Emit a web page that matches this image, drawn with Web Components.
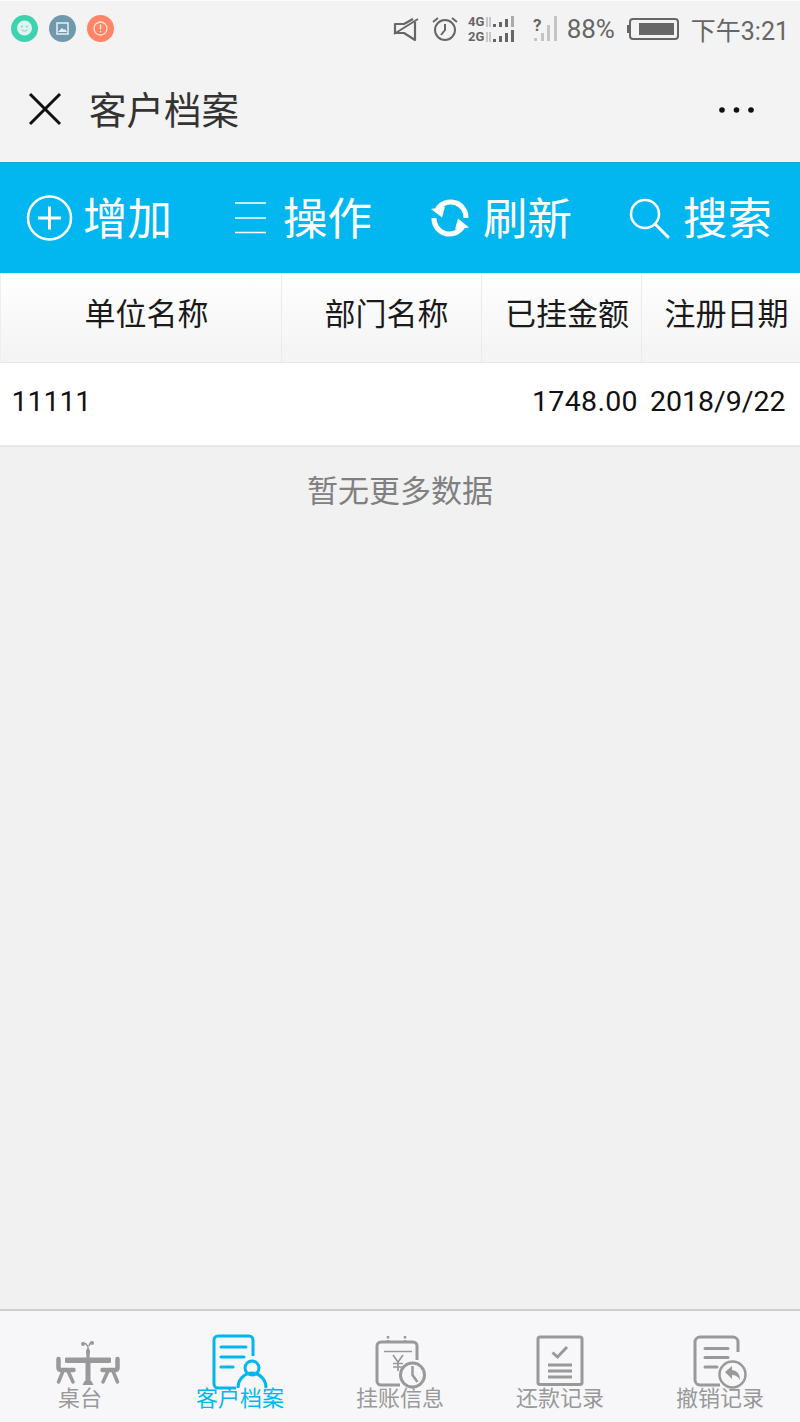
<!DOCTYPE html>
<html lang="zh-CN">
<head>
<meta charset="utf-8">
<title>客户档案</title>
<style>
html,body{margin:0;padding:0;height:100%}
body{font-family:"Noto Sans CJK SC",Roboto,sans-serif;background:#f1f1f2}
</style>
</head>
<body>
<app-shell>
  <status-bar></status-bar>
  <nav-bar title="客户档案"></nav-bar>
  <tool-bar>
    <tool-btn icon="plus" label="增加"></tool-btn>
    <tool-btn icon="menu" label="操作"></tool-btn>
    <tool-btn icon="refresh" label="刷新"></tool-btn>
    <tool-btn icon="search" label="搜索"></tool-btn>
  </tool-bar>
  <data-table></data-table>
  <tab-bar>
    <tab-item icon="table" label="桌台"></tab-item>
    <tab-item icon="customer" label="客户档案" active></tab-item>
    <tab-item icon="credit" label="挂账信息"></tab-item>
    <tab-item icon="repay" label="还款记录"></tab-item>
    <tab-item icon="undo" label="撤销记录"></tab-item>
  </tab-bar>
</app-shell>
<script>
const def=(name,html)=>{customElements.define(name,class extends HTMLElement{
  connectedCallback(){if(this.shadowRoot)return;this.attachShadow({mode:'open'}).innerHTML=typeof html==='function'?html(this):html;}
});};

def('app-shell',`<style>:host{display:flex;flex-direction:column;width:800px;height:1422px;overflow:hidden;background:#f1f1f2}
::slotted(data-table){flex:1}</style><slot></slot>`);

def('status-bar',`<style>
:host{display:flex;align-items:center;height:55px;background:#f3f3f3;border-top:1px solid #fbfbfb;color:#666;font:26px Roboto,"Noto Sans CJK SC",sans-serif}
.l{display:flex;gap:11px;margin-left:10.500px}
.r{display:flex;align-items:center;margin-left:auto;margin-right:11px}
svg{display:block}
.pct{margin-left:8px;width:50px;letter-spacing:-.1px}
.time{margin-left:12px;white-space:nowrap;font-size:25px}
.bt{margin-left:10px}
text{font:700 13px Roboto,sans-serif;fill:#666}
</style>
<div class="l">
<svg width="27" height="27" viewBox="0 0 27 27"><circle cx="13.500" cy="13.500" r="13.500" fill="#3ed2ae"/><circle cx="13.500" cy="13" r="7.500" fill="#def5ef"/><circle cx="11" cy="11.500" r=".9" fill="#6fd9bd"/><circle cx="16" cy="11.500" r=".9" fill="#6fd9bd"/><path d="M10.500 15q3 2.500 6 0" stroke="#6fd9bd" fill="none"/></svg>
<svg width="27" height="27" viewBox="0 0 27 27"><circle cx="13.500" cy="13.500" r="13.500" fill="#7099ad"/><path d="M8 8h11v11H8z" fill="none" stroke="#e8f0f4" stroke-width="1.500"/><path d="M9 17l4-4 2 2 1-1 2 3z" fill="#e8f0f4"/></svg>
<svg width="27" height="27" viewBox="0 0 27 27"><circle cx="13.500" cy="13.500" r="13.500" fill="#ff8566"/><circle cx="13.500" cy="13.500" r="6.500" fill="none" stroke="#ffe9e3" stroke-width="1.300"/><path d="M13.500 9.500v5M13.500 16v1.300" stroke="#ffe9e3" stroke-width="1.400"/></svg>
</div>
<div class="r">
<svg width="26" height="26" viewBox="0 0 26 26"><g fill="none" stroke="#666" stroke-width="2.200" stroke-linejoin="round"><path d="M22 6v18L11 17H2V8h9l9-5"/><path d="M1 18L25 3" stroke-width="2"/></g></svg>
<svg style="margin-left:12px" width="28" height="28" viewBox="0 0 28 28"><g fill="none" stroke="#666" stroke-width="2"><circle cx="14" cy="15" r="10"/><path d="M14 9v6l-4 5"/><path d="M2 7l5-4M26 7l-5-4"/></g></svg>
<svg style="margin-left:9px" width="50" height="30" viewBox="0 0 50 30"><text x="0" y="12">4G</text><text x="0" y="27">2G</text><path d="M19 3v10M22 3v10" stroke="#bbb" stroke-width="1.500"/><path d="M19 18v10M22 18v10" stroke="#bbb" stroke-width="1.500"/><g fill="#666"><rect x="25" y="10" width="3" height="3"/><rect x="31" y="8" width="3" height="5"/><rect x="37" y="5" width="3" height="8"/><rect x="43" y="2" width="3" height="11" fill="#aaa"/><rect x="25" y="25" width="3" height="3"/><rect x="31" y="22" width="3" height="6"/><rect x="37" y="19" width="3" height="9"/><rect x="43" y="16" width="3" height="12"/></g></svg>
<svg style="margin-left:15px" width="26" height="36" viewBox="0 0 26 36"><text x="0" y="20" style="font-size:17px">?</text><g fill="#c4c4c4"><rect x="1" y="27" width="3" height="3"/><rect x="8" y="22" width="3" height="8"/><rect x="14" y="14" width="3" height="16"/><rect x="21" y="5" width="3" height="25"/></g></svg>
<span class="pct">88%</span>
<svg class="bt" width="52" height="24" viewBox="0 0 52 24"><rect x="3" y="2" width="48" height="20" rx="3" fill="none" stroke="#666" stroke-width="2"/><rect x="0" y="8" width="3" height="8" fill="#666"/><rect x="12" y="6" width="35" height="12" fill="#666"/></svg>
<span class="time">下午3:21</span>
</div>`);

def('nav-bar',h=>`<style>
:host{display:flex;align-items:center;height:106px;background:#f3f3f3;color:#333}
svg{display:block}
.x{margin-left:28px}
h1{margin:0 0 0 27px;padding-bottom:2px;font:400 37.500px/1 "Noto Sans CJK SC",sans-serif}
.m{margin-left:auto;margin-right:42px;margin-top:2px}
</style>
<svg class="x" width="34" height="34" viewBox="0 0 34 34"><path d="M2 2l30 30M32 2L2 32" stroke="#111" stroke-width="3" fill="none"/></svg>
<h1>${h.getAttribute('title')}</h1>
<svg class="m" width="40" height="8" viewBox="0 0 40 8"><circle cx="4" cy="4" r="2.800" fill="#111"/><circle cx="18.500" cy="4" r="2.800" fill="#111"/><circle cx="33" cy="4" r="2.800" fill="#111"/></svg>`);

def('tool-bar',`<style>:host{display:grid;grid-template-columns:repeat(4,200px);height:111px;background:#02b7f0;box-shadow:inset 0 1px 0 #0dabd9}</style><slot></slot>`);

const toolIcons={
plus:`<circle cx="29.500" cy="30" r="21.500" fill="none" stroke="#fff" stroke-width="2.500"/><path d="M18 30h23M29.500 18.500v23" stroke="#fff" stroke-width="3"/>`,
menu:`<path d="M15 15h31M15 30h31M15 44.500h31" stroke="#fff" stroke-width="1.700"/>`,
refresh:`<g fill="none" stroke="#fff" stroke-width="5"><path d="M17.500 21A15.500 15.500 0 0 1 46 30"/><path d="M14 30A15.500 15.500 0 0 0 42.500 39"/></g><path d="M11 21l14 -2.500l-3 11z" fill="#fff"/><path d="M49 39.500l-14 2l3 -11z" fill="#fff"/>`,
search:`<circle cx="25" cy="26" r="14" fill="none" stroke="#fff" stroke-width="2.500"/><path d="M35 36l13 13" stroke="#fff" stroke-width="3" stroke-linecap="round"/>`
};
def('tool-btn',h=>`<style>
:host{display:flex;align-items:center;padding-left:20px;color:#fff}
svg{display:block;flex:none}
span{margin-left:3px;padding-bottom:2px;font:400 44.500px/1 "Noto Sans CJK SC",sans-serif;white-space:nowrap}
</style><svg width="60" height="60" viewBox="0 0 60 60">${toolIcons[h.getAttribute('icon')]}</svg><span>${h.getAttribute('label')}</span>`);

def('data-table',`<style>
:host{display:block;background:#f1f1f2;color:#111;font-family:Roboto,"Noto Sans CJK SC",sans-serif}
.g{display:grid;grid-template-columns:282px 200px 160px 158px}
.head{height:89px;background:linear-gradient(#fff,#f3f3f3);border-bottom:1px solid #e6e6e6}
.head div{display:flex;align-items:center;justify-content:center;font:400 31px/1 "Noto Sans CJK SC",sans-serif;color:#1a1a1a;border-right:1px solid #ebebeb;padding-bottom:13px;white-space:nowrap}
.head div:first-child{padding-left:11px;border-left:1px solid #eee}
.head div:nth-child(2){padding-left:10px}
.head div:nth-child(3){padding-left:11px}
.head div:last-child{padding-left:11px;border-right:0}
.row{height:82px;background:#fff;border-bottom:2px solid #e8e8e8;font-size:28.500px;line-height:1;align-items:center}
.row div{padding-bottom:3px;white-space:nowrap}
.row div:first-child{padding-left:11.500px;letter-spacing:-.05px}
.row div:nth-child(3){justify-self:end;padding-right:4px;letter-spacing:.35px}
.row div:nth-child(4){padding-left:8px}
.empty{text-align:center;color:#808080;font:400 31px/1 "Noto Sans CJK SC",sans-serif;padding-top:26px}
</style>
<div class="g head"><div>单位名称</div><div>部门名称</div><div>已挂金额</div><div>注册日期</div></div>
<div class="g row"><div>11111</div><div></div><div>1748.00</div><div>2018/9/22</div></div>
<div class="empty">暂无更多数据</div>`);

def('tab-bar',`<style>:host{display:grid;grid-template-columns:repeat(5,160px);height:111px;background:#f7f7fa;border-top:2px solid #cfcfcf}</style><slot></slot>`);

const tabIcons={
table:`<g fill="#999" stroke="#999"><rect x="25" y="27.500" width="46" height="5.500" rx="1" stroke="none"/><rect x="45.500" y="30" width="5" height="22" stroke="none"/><path d="M42.500 55l2-4h7l2 4z" stroke="none"/><path d="M46.500 28l-.5-7 2-5 2 5-.5 7z" stroke="none"/><path d="M48 17q-2-5-6-3.500M49 16q1-4 3-4" fill="none" stroke-width="1.500"/><circle cx="52" cy="13" r="2" stroke="none"/><circle cx="43" cy="14" r="2" stroke="none"/></g>
<g fill="none" stroke="#999" stroke-width="4.500" stroke-linecap="round"><path d="M18.500 29v9q0 2 3 2h12"/><path d="M23 41l-4.500 11M28 41l5 11" stroke-width="3.500"/><path d="M77.500 29v9q0 2-3 2h-12"/><path d="M73 41l4.500 11M68 41l-5 11" stroke-width="3.500"/></g>`,
customer:`<g fill="none" stroke="#02b7f0" stroke-width="3"><path d="M53 26V10a4 4 0 0 0-4-4H18a4 4 0 0 0-4 4v44a4 4 0 0 0 4 4h18"/><path d="M21 17h25M21 27h23M21 37h12" stroke-linecap="round"/><circle cx="52" cy="38" r="7"/><path d="M38 58a14 15 0 0 1 28 0"/></g>`,
credit:`<g fill="none" stroke="#999"><path d="M57 30V16a4 4 0 0 0-4-4H21a4 4 0 0 0-4 4v35a4 4 0 0 0 4 4h19" stroke-width="3"/><path d="M28 6v8M45 6v8" stroke-width="2.500" stroke-dasharray="2.500 1.500"/><path d="M24 21.500h28" stroke-width="1.500"/><path d="M33 25l5 7 5-7M38 32v9M33 33.500h10M33 37h10" stroke-width="1.700"/><circle cx="52.500" cy="45" r="12" stroke-width="3" fill="#f7f7fa"/><path d="M52.500 36v9l5 7" stroke-width="2.500"/></g>`,
repay:`<g fill="none" stroke="#999"><rect x="18" y="7" width="44" height="47.500" rx="2" stroke-width="3"/><path d="M32.500 22.500l5 4.500 9.500-10" stroke-width="3"/><path d="M28 35h24M28 41h24M28 47h24" stroke-width="3"/></g>`,
undo:`<g fill="none" stroke="#999"><path d="M58 22V12a5 5 0 0 0-5-5H20a5 5 0 0 0-5 5v38a5 5 0 0 0 5 5h20" stroke-width="3"/><path d="M25 18.500h23M25 27.500h23M25 37h12" stroke-width="3" stroke-linecap="round"/><circle cx="52.500" cy="44.500" r="13" stroke-width="2.500" fill="#f7f7fa"/></g><path d="M45 42l7-6v4q8 1 8 10q-3-5-8-5v4z" fill="#999"/>`
};
def('tab-item',h=>{const a=h.hasAttribute('active');return `<style>
:host{display:flex;flex-direction:column;align-items:center;padding-top:19px;color:${a?'#02b7f0':'#999'}}
svg{display:block;width:80px;height:64px}
span{margin-top:-10px;font:400 22px/1.100 "Noto Sans CJK SC",sans-serif;white-space:nowrap}
</style><svg viewBox="0 0 80 64">${tabIcons[h.getAttribute('icon')]}</svg><span>${h.getAttribute('label')}</span>`});
</script>
</body>
</html>
